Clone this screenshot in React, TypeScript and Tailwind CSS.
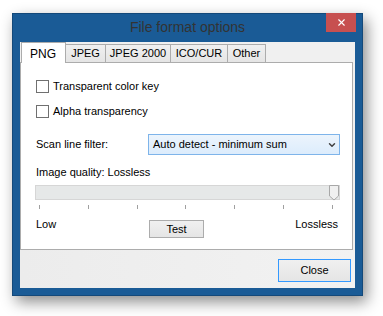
import {ChevronDown, X} from "lucide-react";

const tabs = [
    {label: "JPEG", w: "w-[41px]"},
    {label: "JPEG 2000", w: "w-[66px]"},
    {label: "ICO/CUR", w: "w-[58px]"},
    {label: "Other", w: "w-[39px]"},
];

const ticks = [0, 1, 2, 3, 4, 5, 6];

function Checkbox({label}: { label: string }) {
    return (
        <label className="flex items-center gap-[4px] h-[13px]">
            <span className="w-[13px] h-[13px] border border-[#707070] bg-white"/>
            <span>{label}</span>
        </label>
    );
}

export default function App() {
    return (
        <div className="w-[383px] h-[316px] bg-white pl-[12px] pt-[13px] font-['Liberation_Sans',Arial,sans-serif] text-[11px] text-black">
            <div className="w-[351px] h-[283px] bg-[#1a5b96] border border-[#14497a] shadow-[4px_6px_14px_rgba(0,0,0,0.45)] flex flex-col px-[7px] pb-[7px]">
                <div className="relative h-[28px] flex items-center justify-center">
                    <span className="text-[14px] text-[#333333] -mt-[1px]">File format options</span>
                    <button className="absolute right-[-1px] top-[-1px] w-[30px] h-[19px] bg-[#c75050] flex items-center justify-center">
                        <X size={11} strokeWidth={2.5} className="text-white"/>
                    </button>
                </div>
                <div className="flex-1 bg-[#f0f0f0] flex flex-col">
                    <div className="flex items-end h-[20px] pl-[1px]">
                        <div className="w-[45px] h-[21px] bg-white border border-b-0 border-[#acacac] pl-[8px] pt-[2px] text-[12px] relative z-10 -mb-[1px]">
                            PNG
                        </div>
                        {tabs.map(t => (
                            <div key={t.label}
                                 className={`${t.w} h-[18px] -ml-[1px] border border-b-0 border-[#acacac] bg-gradient-to-b from-[#f0f0f0] to-[#e5e5e5] text-center leading-[17px]`}>
                                {t.label}
                            </div>
                        ))}
                    </div>
                    <div className="h-[188px] mr-[2px] bg-white border border-[#acacac] pl-[15px] pr-[12px] pt-[17px]">
                        <div className="flex flex-col gap-[12px]">
                            <Checkbox label="Transparent color key"/>
                            <Checkbox label="Alpha transparency"/>
                        </div>
                        <div className="flex items-center mt-[16px] h-[21px]">
                            <span className="w-[112px]">Scan line filter:</span>
                            <div className="flex-1 h-[21px] border border-[#7eb4ea] bg-gradient-to-b from-[#ecf4fc] to-[#dcecfc] flex items-center pl-[4px] pr-[2px]">
                                <span className="flex-1">Auto detect - minimum sum</span>
                                <ChevronDown size={10} strokeWidth={3.5} className="text-[#404040]"/>
                            </div>
                        </div>
                        <div className="mt-[10px] leading-[14px]">Image quality: Lossless</div>
                        <div className="mt-[6px] -ml-[1px] h-[15px] bg-[#e6e8e8] border border-[#d6d6d6] flex justify-end">
                            <svg width="10" height="16" viewBox="0 0 10 16" className="-mt-[1px]">
                                <path d="M0.5 0.5 H9.5 V11 L5 15 L0.5 11 Z" fill="#f0f0f0" stroke="#a8a8a8"/>
                            </svg>
                        </div>
                        <div className="flex justify-between px-[3px] mr-[4px] mt-[5px]">
                            {ticks.map(i => <span key={i} className="w-[1px] h-[4px] bg-[#a0a0a0]"/>)}
                        </div>
                        <div className="grid grid-cols-[113px_55px_1fr] items-start mt-[8px] pr-[2px]">
                            <span className="leading-[14px]">Low</span>
                            <button className="h-[18px] mt-[3px] border border-[#acacac] bg-gradient-to-b from-[#f0f0f0] to-[#e5e5e5] leading-[16px]">
                                Test
                            </button>
                            <span className="leading-[14px] justify-self-end">Lossless</span>
                        </div>
                    </div>
                    <div className="flex-1 flex items-start justify-end pt-[9px] pr-[4px] bg-gradient-to-r from-[#ececec] to-[#f2f2f2]">
                        <button className="w-[73px] h-[23px] border border-[#3399ff] bg-gradient-to-b from-[#f0f0f0] to-[#e5e5e5]">
                            Close
                        </button>
                    </div>
                </div>
            </div>
        </div>
    );
}
